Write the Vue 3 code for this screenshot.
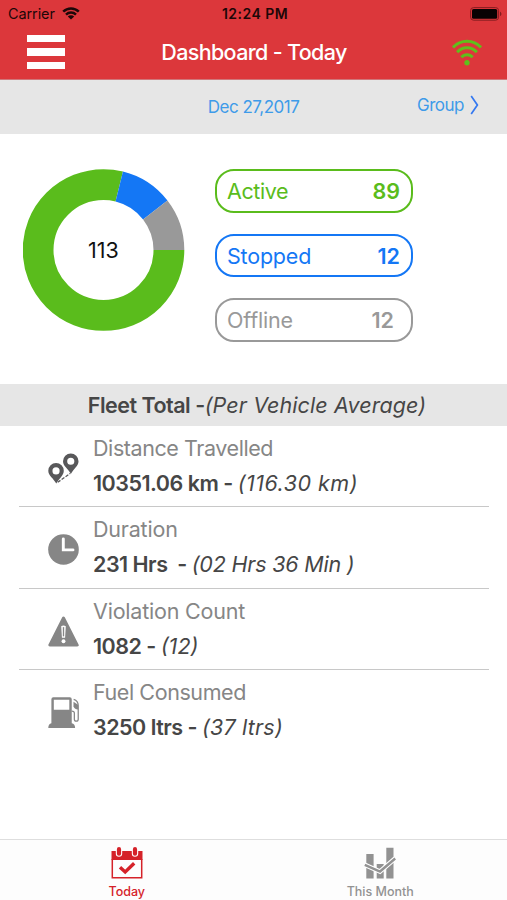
<script setup>
const total = 113
const statuses = [
  { key: 'active', label: 'Active', count: 89 },
  { key: 'stopped', label: 'Stopped', count: 12 },
  { key: 'offline', label: 'Offline', count: 12 },
]

const radius = 65.4
const circumference = 2 * Math.PI * radius
let offset = 0
const segments = statuses.map((s) => {
  const length = (s.count / total) * circumference
  const segment = { key: s.key, dash: `${length} ${circumference - length}`, offset: -offset }
  offset += length
  return segment
})

const metrics = [
  { key: 'distance', label: 'Distance Travelled', value: '10351.06 km - ', average: '(116.30 km)' },
  { key: 'duration', label: 'Duration', value: '231 Hrs  - ', average: '(02 Hrs 36 Min )' },
  { key: 'violation', label: 'Violation Count', value: '1082 - ', average: '(12)' },
  { key: 'fuel', label: 'Fuel Consumed', value: '3250 ltrs - ', average: '(37 ltrs)' },
]
</script>

<template>
  <div class="screen">
    <header class="header">
      <div class="status-bar">
        <div class="carrier">
          <span>Carrier</span>
          <svg class="wifi" viewBox="0 0 18 13">
            <path d="M1.200 4.600a11.200 11.200 0 0 1 15.600 0M4 7.600a7.200 7.200 0 0 1 10 0" fill="none" stroke="currentColor" stroke-width="2.500" />
            <path d="M9 12.600 5.800 9.500a4.600 4.600 0 0 1 6.400 0z" fill="currentColor" />
          </svg>
        </div>
        <span class="clock">12:24 PM</span>
        <svg class="battery" viewBox="0 0 32 14">
          <rect x=".6" y=".6" width="28" height="12.600" rx="3" fill="none" stroke="#861d20" stroke-width="1" />
          <rect x="2" y="2" width="25.200" height="9.800" rx="1.600" fill="#080203" />
          <path d="M30 4.700c1.900.7 1.900 3.700 0 4.400z" fill="#861d20" />
        </svg>
      </div>
      <div class="nav-bar">
        <button class="menu" aria-label="Menu"><i></i><i></i><i></i></button>
        <h1>Dashboard - Today</h1>
        <svg class="signal" viewBox="0 0 30 27">
          <g fill="none" stroke="#5fbf1b" stroke-width="3">
            <path d="M1 8.400a19 19 0 0 1 28 0" />
            <path d="M5.200 13.200a13 13 0 0 1 19.600 0" />
            <path d="M9.400 18.200a7.400 7.400 0 0 1 11.200 0" />
          </g>
          <circle cx="15" cy="23.800" r="2.700" fill="#5fbf1b" />
        </svg>
      </div>
    </header>

    <div class="filter-bar">
      <span class="date">Dec 27,2017</span>
      <div class="group">
        <span>Group</span>
        <svg viewBox="0 0 9 20"><path d="M1.200 1 7.400 10 1.200 19" fill="none" stroke="#3478f0" stroke-width="1.700" /></svg>
      </div>
    </div>

    <section class="summary">
      <svg class="donut" viewBox="0 0 162 162">
        <circle
          v-for="s in segments"
          :key="s.key"
          :class="s.key"
          cx="80.500"
          cy="81"
          :r="radius"
          fill="none"
          stroke="currentColor"
          stroke-width="30.800"
          :stroke-dasharray="s.dash"
          :stroke-dashoffset="s.offset"
        />
        <text x="80.500" y="88.700" text-anchor="middle">{{ total }}</text>
      </svg>
      <div class="pills">
        <div v-for="s in statuses" :key="s.key" class="pill" :class="s.key">
          <span>{{ s.label }}</span>
          <b>{{ s.count }}</b>
        </div>
      </div>
    </section>

    <h2 class="section-title"><b>Fleet Total -</b><em>(Per Vehicle Average)</em></h2>

    <ul class="metrics">
      <li v-for="m in metrics" :key="m.key" :class="m.key">
        <svg v-if="m.key === 'distance'" class="icon" viewBox="0 0 32 32">
          <g fill="#58585a" fill-rule="evenodd">
            <path d="M23.500.4a8 8 0 0 1 8 8c0 4.800-4.800 7.700-7.800 13-3.200-5.400-8.200-8.200-8.200-13a8 8 0 0 1 8-8zm0 4.400a3.700 3.700 0 1 0 0 7.400 3.700 3.700 0 0 0 0-7.400z" />
            <path d="M8.300 10.400a8 8 0 0 1 8 8c0 4.800-4.800 7.800-7.700 13.200-3.200-5.500-8.300-8.400-8.300-13.200a8 8 0 0 1 8-8zm0 4.400a3.700 3.700 0 1 0 0 7.400 3.700 3.700 0 0 0 0-7.400z" />
          </g>
          <path d="M10 30.300 23 21" stroke="#58585a" stroke-width="1.300" stroke-dasharray="3.500 1.500" />
        </svg>
        <svg v-else-if="m.key === 'duration'" class="icon" viewBox="0 0 32 32">
          <circle cx="16" cy="16" r="15.800" fill="#868686" />
          <path d="M15.800 5v11.400h10" fill="none" stroke="#fff" stroke-width="3" stroke-linecap="round" />
        </svg>
        <svg v-else-if="m.key === 'violation'" class="icon" viewBox="0 0 32 32">
          <path d="M16 2 30.200 30H1.800z" fill="#868686" stroke="#868686" stroke-width="3" stroke-linejoin="round" />
          <path d="M13.600 10.500q2.400-1.600 4.800 0l-.8 12h-3.200z" fill="#fff" />
          <path d="M16 11.500v9.500" stroke="#868686" stroke-width="1.400" />
          <circle cx="16" cy="26" r="2" fill="#fff" />
        </svg>
        <svg v-else class="icon" viewBox="0 0 32 32">
          <path fill="#868686" fill-rule="evenodd" d="M5.500.2h17q2 0 2 2V27q3.500.5 3.500 5H.3q0-4.500 3.200-5V2.200q0-2 2-2zm.5 2.600v10.400h16V2.800z" />
          <path d="M26.500 2.500q4.700 1.500 4.700 6.500V23q0 2-2 2t-2-2v-6.500q0-2-2.700-2" fill="none" stroke="#868686" stroke-width="1.300" />
          <path d="M26.300 5 31 8v5q-4-.5-4.700-3.500z" fill="#868686" />
        </svg>
        <div class="metric-text">
          <span class="label">{{ m.label }}</span>
          <span class="value"><b>{{ m.value }}</b><em>{{ m.average }}</em></span>
        </div>
      </li>
    </ul>

    <nav class="tab-bar">
      <a class="tab current">
        <svg viewBox="0 0 32 32">
          <path fill="#d52229" d="M.5 4h31v9H.5z" />
          <path d="M1.300 12v18.700h29.400V12" fill="none" stroke="#d52229" stroke-width="1.500" />
          <path d="M8 3v3.500M24 3v3.500" stroke="#fff" stroke-width="6.400" stroke-linecap="round" />
          <path d="M8 2.200v4.500M24 2.200v4.500" stroke="#d52229" stroke-width="4.200" stroke-linecap="round" />
          <path d="m9 20.200 5.200 4.800 9-8.700" fill="none" stroke="#d52229" stroke-width="3.400" />
        </svg>
        <span>Today</span>
      </a>
      <a class="tab">
        <svg viewBox="0 0 32 32">
          <path fill="#929292" d="M2.300 7h7.300v24.500H2.300zM12.700 17h7v14.500h-7zM22.300.8h7.200v30.700h-7.200z" />
          <path d="M1 17.800 16 24.500 31 11.500" fill="none" stroke="#fff" stroke-width="4.600" />
          <path d="M.8 17.800 16 24.500 31.200 11.500" fill="none" stroke="#929292" stroke-width="2.400" />
        </svg>
        <span>This Month</span>
      </a>
    </nav>
  </div>
</template>

<style>
body {
  background: #fff;
}
</style>

<style scoped>
.screen {
  display: flex;
  flex-direction: column;
  width: 507px;
  height: 900px;
  overflow: hidden;
  background: #fff;
  color: #464646;
  font-family: Inter, "Liberation Sans", sans-serif;
  font-size: 21.5px;
}
.header {
  height: 79.500px;
  flex: none;
  background: #dc373b;
  border-bottom: 1px solid #d0777a;
  box-sizing: border-box;
}
.status-bar {
  display: grid;
  grid-template-columns: 1fr auto 1fr;
  align-items: center;
  height: 27px;
  padding: 0 5px 0 8px;
  color: #1d0708;
  font-size: 14.500px;
}
.carrier {
  display: flex;
  align-items: center;
  gap: 7px;
  letter-spacing: -0.1px;
}
.wifi {
  width: 18px;
  height: 13px;
}
.clock {
  font-weight: 600;
  font-size: 14px;
  letter-spacing: 0.45px;
}
.battery {
  width: 32px;
  height: 14px;
  justify-self: end;
}
.nav-bar {
  display: grid;
  grid-template-columns: 38px 1fr 30px;
  align-items: center;
  height: 50px;
  padding: 0 25px 0 27px;
}
.menu {
  display: flex;
  flex-direction: column;
  gap: 6px;
  padding: 0;
  border: 0;
  background: none;
}
.menu i {
  height: 7.500px;
  background: #fff;
}
h1 {
  margin: 0;
  padding-right: 9px;
  color: #fff;
  font-size: 21.500px;
  font-weight: 500;
  letter-spacing: -0.65px;
  text-align: center;
}
.signal {
  width: 30px;
  height: 27px;
}
.filter-bar {
  display: grid;
  grid-template-columns: 1fr auto 1fr;
  align-items: center;
  height: 54.500px;
  flex: none;
  padding: 1px 28px 0;
  box-sizing: border-box;
  background: #e6e6e6;
  color: #3e9be9;
  font-size: 17px;
  letter-spacing: -0.5px;
}
.date {
  grid-column: 2;
}
.group {
  display: flex;
  align-items: center;
  justify-self: end;
  gap: 6px;
  padding-bottom: 4px;
}
.group svg {
  width: 9px;
  height: 20px;
}
.summary {
  display: flex;
  gap: 30px;
  height: 249.500px;
  flex: none;
  padding: 35px 0 0 23px;
  box-sizing: border-box;
}
.donut {
  width: 162px;
  height: 162px;
}
.donut text {
  fill: #111;
  font-size: 21.500px;
}
.active {
  color: #5abc1c;
}
.stopped {
  color: #1477f5;
}
.offline {
  color: #999;
}
.pills {
  display: flex;
  flex-direction: column;
  gap: 21px;
}
.pill {
  display: flex;
  align-items: center;
  justify-content: space-between;
  width: 198px;
  height: 43.500px;
  padding: 1px 11px 0 10px;
  box-sizing: border-box;
  border: 2px solid currentColor;
  border-radius: 19px;
  letter-spacing: -0.2px;
}
.pill.active {
  letter-spacing: -0.4px;
}
.pill.offline {
  padding-right: 17px;
}
b {
  font-weight: 600;
  letter-spacing: -0.5px;
}
.pill b {
  letter-spacing: 0;
}
.section-title {
  height: 42.500px;
  flex: none;
  margin: 0;
  padding-left: 7px;
  background: #e6e6e6;
  font-size: 21.500px;
  font-weight: 400;
  line-height: 43px;
  text-align: center;
}
.section-title em {
  letter-spacing: 0.1px;
}
.metrics {
  flex: 1;
  margin: 0;
  padding: 0 18px 0 19px;
  list-style: none;
}
.metrics li {
  display: flex;
  align-items: flex-start;
  gap: 14px;
  height: 81.400px;
  padding: 8px 0 0 29px;
  box-sizing: border-box;
  border-bottom: 1.500px solid #c8c8c8;
}
.metrics li:last-child {
  border-bottom: 0;
}
.icon {
  width: 31px;
  height: 31px;
  margin-top: 19px;
}
.metric-text {
  display: flex;
  flex-direction: column;
  gap: 7px;
  line-height: 28px;
}
.label {
  color: #868686;
  letter-spacing: -0.2px;
}
.distance .label,
.fuel .label {
  letter-spacing: -0.42px;
}
.value {
  white-space: pre;
}
.distance em {
  letter-spacing: 0.5px;
}
.duration em {
  letter-spacing: -0.2px;
}
.fuel em {
  letter-spacing: 0.2px;
}
.tab-bar {
  display: grid;
  grid-template-columns: 1fr 1fr;
  height: 61px;
  flex: none;
  box-sizing: border-box;
  border-top: 1.500px solid #dedede;
  background: #fdfdfd;
}
.tab {
  display: flex;
  flex-direction: column;
  align-items: center;
  gap: 5px;
  padding-top: 7px;
  color: #929292;
  font-size: 12.500px;
  font-weight: 500;
  line-height: 16px;
}
.tab svg {
  width: 32px;
  height: 32px;
}
.tab.current {
  color: #d52229;
}
</style>
